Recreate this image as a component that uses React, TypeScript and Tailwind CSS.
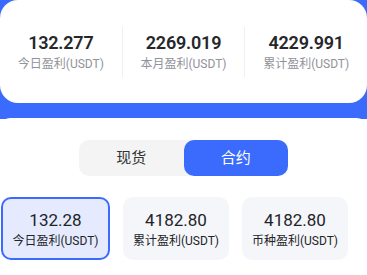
import { useState } from "react";

const SUMMARY = [
  { value: "132.277", label: "今日盈利(USDT)" },
  { value: "2269.019", label: "本月盈利(USDT)" },
  { value: "4229.991", label: "累计盈利(USDT)" },
];

const CARDS = [
  { value: "132.28", label: "今日盈利(USDT)" },
  { value: "4182.80", label: "累计盈利(USDT)" },
  { value: "4182.80", label: "币种盈利(USDT)" },
];

export default function App() {
  const [tab, setTab] = useState<"spot" | "contract">("contract");
  const [active, setActive] = useState(0);

  return (
    <div
      className="w-[367px] h-[275px] overflow-hidden bg-white"
      style={{ fontFamily: 'Roboto, "Noto Sans CJK SC", sans-serif' }}
    >
      {/* summary card on blue band */}
      <div className="bg-[#3b6bfd] pb-[16px]">
        <div className="h-[103px] rounded-[18px] bg-white flex items-center">
          {SUMMARY.map((s, i) => (
            <div
              key={s.label}
              className={
                "flex-1 flex flex-col items-center " +
                (i > 0 ? "border-l border-[#f0f0f2]" : "")
              }
            >
              <div className="h-[50px] flex flex-col items-center justify-center">
                <div className="text-[18px] leading-[22px] font-semibold tracking-[-0.2px] text-[#25272b]">
                  {s.value}
                </div>
                <div className="mt-[2px] text-[12px] leading-[16px] text-[#909399]">
                  {s.label}
                </div>
              </div>
            </div>
          ))}
        </div>
      </div>

      {/* tabs */}
      <div className="bg-white rounded-t-[10px] -mt-[1px] pt-[22px] flex justify-center">
        <div className="flex w-[209px] h-[36px] rounded-[10px] bg-[#f4f4f5]">
          <button
            onClick={() => setTab("spot")}
            className={
              "flex-1 rounded-[10px] text-[15px] " +
              (tab === "spot" ? "bg-[#3b6bfd] text-white" : "text-[#333]")
            }
          >
            现货
          </button>
          <button
            onClick={() => setTab("contract")}
            className={
              "flex-1 rounded-[10px] text-[15px] " +
              (tab === "contract" ? "bg-[#3b6bfd] text-white" : "text-[#333]")
            }
          >
            合约
          </button>
        </div>
      </div>

      {/* stat cards */}
      <div className="mt-[21px] pl-[1px] flex gap-[13px]">
        {CARDS.map((c, i) => (
          <button
            key={c.label}
            onClick={() => setActive(i)}
            className={
              "h-[63px] rounded-[10px] flex flex-col items-center justify-center " +
              (i === 0 ? "w-[109px] " : "w-[106px] ") +
              (active === i
                ? "bg-[#e5eaff] border-2 border-[#3b6bfd]"
                : "bg-[#f5f6fa]")
            }
          >
            <span className="text-[17px] leading-[22px] text-[#222428]">{c.value}</span>
            <span className="mt-[2px] text-[12px] leading-[16px] text-[#222428]">
              {c.label}
            </span>
          </button>
        ))}
      </div>
    </div>
  );
}
